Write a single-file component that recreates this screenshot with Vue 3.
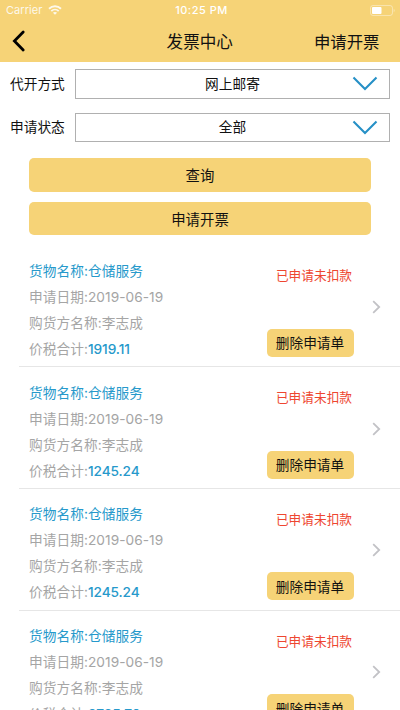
<script setup>
const filters = [
  { label: '代开方式', value: '网上邮寄' },
  { label: '申请状态', value: '全部' },
]
const invoices = [
  { id: 1, amount: '1919.11' },
  { id: 2, amount: '1245.24' },
  { id: 3, amount: '1245.24' },
  { id: 4, amount: '2785.70' },
]
</script>

<template>
  <div class="screen">
    <header>
      <div class="status-bar">
        <div class="carrier">
          <span>Carrier</span>
          <svg width="14" height="10" viewBox="0 0 14 10" fill="none" stroke="#fff" stroke-width="1.9">
            <path d="M1 3.7C4.5.4 9.5.4 13 3.7M3.3 6.1c2.1-2 5.3-2 7.4 0" />
            <path d="M7 9.8 4.9 7.7c1.2-1.1 3-1.1 4.2 0z" fill="#fff" stroke="none" />
          </svg>
        </div>
        <span class="time">10:25 PM</span>
        <svg class="battery" width="25" height="11" viewBox="0 0 25 11">
          <rect x=".5" y=".5" width="22" height="10" rx="2.5" fill="none" stroke="#fff" stroke-opacity=".4" />
          <rect x="2" y="2" width="9.5" height="7" rx="1" fill="#fff" />
          <path d="M23.7 3.8v3.4q1-.6 1-1.7t-1-1.7" fill="#fff" fill-opacity=".4" />
        </svg>
      </div>
      <nav>
        <svg class="back" width="14" height="22" viewBox="0 0 14 22" fill="none" stroke="#000" stroke-width="2.8" stroke-linecap="round">
          <path d="M11.2 2 2.4 11l8.8 9" />
        </svg>
        <h1>发票中心</h1>
        <span class="apply">申请开票</span>
      </nav>
    </header>

    <section class="filters">
      <div v-for="f in filters" :key="f.label" class="filter">
        <span class="label">{{ f.label }}</span>
        <div class="select">
          <span>{{ f.value }}</span>
          <svg width="26" height="15" viewBox="0 0 26 15" fill="none" stroke="#2690c6" stroke-width="2.1">
            <path d="M1.5 1.5 13 13 24.5 1.5" />
          </svg>
        </div>
      </div>
    </section>

    <section class="actions">
      <button>查询</button>
      <button>申请开票</button>
    </section>

    <ul class="list">
      <li v-for="item in invoices" :key="item.id">
        <div class="info">
          <p class="blue">货物名称:仓储服务</p>
          <p>申请日期:<span class="num">2019-06-19</span></p>
          <p>购货方名称:李志成</p>
          <p>价税合计:<span class="blue amount">{{ item.amount }}</span></p>
        </div>
        <div class="side">
          <span class="state">已申请未扣款</span>
          <button>删除申请单</button>
        </div>
        <svg class="more" width="9" height="14" viewBox="0 0 9 14" fill="none" stroke="#c2c2c6" stroke-width="1.8">
          <path d="m1.2 1.2 6 5.8-6 5.8" />
        </svg>
      </li>
    </ul>
  </div>
</template>

<style>
body {
  overflow: hidden;
}
</style>

<style scoped>
.screen {
  width: 400px;
  height: 710px;
  overflow: hidden;
  background: #fff;
  color: #111;
  font-family: Inter, "Noto Sans CJK SC", sans-serif;
  font-size: 13.7px;
}
header {
  height: 62px;
  background: #f6d377;
}
.status-bar {
  display: grid;
  grid-template-columns: 1fr auto 1fr;
  align-items: center;
  height: 20px;
  padding: 0 5px 0 6px;
  color: #fff;
  font-size: 11px;
}
.carrier {
  display: flex;
  align-items: center;
  gap: 6px;
  letter-spacing: 0.05px;
  opacity: 0.85;
}
.time {
  padding-left: 2px;
  font-weight: 500;
  letter-spacing: 0.5px;
}
.battery {
  justify-self: end;
}
nav {
  display: grid;
  grid-template-columns: 1fr auto 1fr;
  align-items: center;
  height: 42px;
  padding: 0 20.5px 0 12px;
  font-size: 16.4px;
}
h1 {
  margin: 0;
  padding: 0 0 1px 8px;
  font-size: 16.6px;
  font-weight: 400;
}
.apply {
  justify-self: end;
  padding-bottom: 1px;
}
.filters {
  display: flex;
  flex-direction: column;
  gap: 14px;
  padding: 7px 10px 0;
}
.filter {
  display: flex;
  align-items: center;
  height: 29.5px;
}
.label {
  width: 65px;
  padding-bottom: 2px;
}
.select {
  box-sizing: border-box;
  flex: 1;
  height: 29.5px;
  display: grid;
  grid-template-columns: 1fr auto 1fr;
  align-items: center;
  padding: 0 11px;
  border: 1px solid #b0b0b0;
}
.select span {
  grid-column: 2;
  padding-bottom: 2px;
}
.select svg {
  justify-self: end;
}
button {
  padding: 0;
  border: 0;
  border-radius: 5px;
  background: #f6d377;
  color: #111;
  font: inherit;
}
.actions {
  display: flex;
  flex-direction: column;
  gap: 10px;
  padding: 16px 29px 10.4px;
}
.actions button {
  height: 33.5px;
  font-size: 14.4px;
}
.list {
  margin: 0 0 0 19px;
  padding: 0;
  list-style: none;
}
li {
  box-sizing: border-box;
  display: flex;
  height: 121.8px;
  padding: 12.5px 19px 0 10px;
  border-bottom: 1px solid #e6e6e6;
}
.info {
  flex: 1;
  color: #a5a5a5;
  white-space: nowrap;
}
p {
  margin: 0;
  height: 26px;
  line-height: 26px;
  letter-spacing: 0.05px;
}
.blue {
  color: #2699cb;
}
.num {
  letter-spacing: 0.05px;
}
.amount {
  font-weight: 500;
  letter-spacing: -0.1px;
}
.side {
  box-sizing: border-box;
  display: flex;
  flex-direction: column;
  align-items: center;
  justify-content: space-between;
  width: 88px;
  height: 99px;
  margin-right: 18px;
  padding-top: 8.5px;
}
.state {
  margin-left: 8px;
  color: #ee4630;
  font-size: 12.7px;
  line-height: 20px;
  white-space: nowrap;
}
.side button {
  width: 87px;
  height: 28px;
  padding-bottom: 1px;
}
.more {
  margin-top: 42px;
}
</style>
